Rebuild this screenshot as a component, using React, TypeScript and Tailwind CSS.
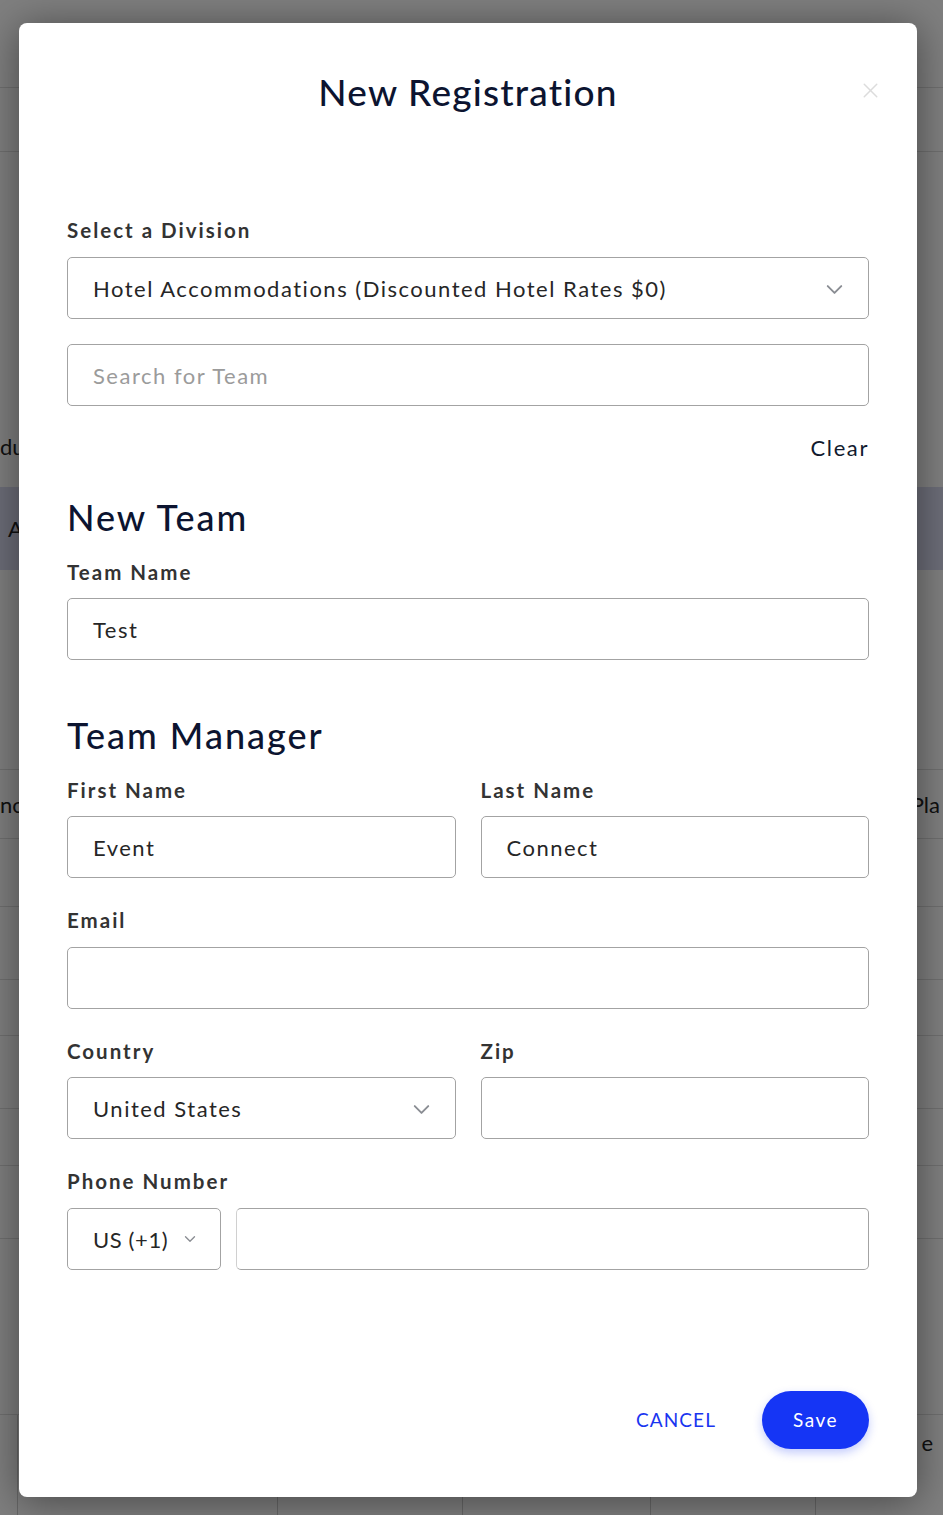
import React from "react";
import { ChevronDown, X } from "lucide-react";

const font = { fontFamily: "Lato, 'Noto Sans', sans-serif" };

function Label({ children }: { children: React.ReactNode }) {
  return (
    <div className="h-[28px] text-[20.5px] leading-[28px] font-bold text-[#333333] tracking-[2px]">
      {children}
    </div>
  );
}

function Field({
  value,
  placeholder,
  className = "",
}: {
  value?: string;
  placeholder?: string;
  className?: string;
}) {
  return (
    <div
      className={`h-[62px] rounded-[5px] border border-[#a3a3a3] flex items-center px-[25px] text-[22px] tracking-[1.5px] ${className}`}
    >
      {value ? (
        <span className="text-[#262626]">{value}</span>
      ) : (
        <span className="text-[#9b9b9b]">{placeholder}</span>
      )}
    </div>
  );
}

function Select({ value, className = "" }: { value: string; className?: string }) {
  return (
    <div
      className={`h-[62px] rounded-[5px] border border-[#a3a3a3] flex items-center justify-between pl-[25px] pr-[20px] text-[22px] tracking-[1.5px] text-[#262626] ${className}`}
    >
      <span>{value}</span>
      <ChevronDown className="w-[27px] h-[27px] mt-[3px] text-[#8a8d93]" strokeWidth={1.7} />
    </div>
  );
}

function BackgroundPage() {
  return (
    <div className="w-[943px] h-[1515px] bg-white text-[22px] text-[#222]" style={font}>
      <div className="h-[87px]" />
      <div className="h-[64px] border-t border-[#dedede]" />
      <div className="h-[280px] border-t border-[#dedede]" />
      <div className="h-[56px] leading-none pt-[5px]">dule</div>
      <div className="h-[83px] bg-[#d8daf0] flex items-center pl-[8px]">All</div>
      <div className="h-[199px]" />
      <div className="h-[69px] border-t border-[#dedede] flex items-center justify-between">
        <span>nc</span>
        <span className="pr-[3px]">Pla</span>
      </div>
      <div className="h-[68px] border-t border-[#dedede]" />
      <div className="h-[73px] border-t border-[#dedede]" />
      <div className="h-[56px] border-t border-[#dedede]" />
      <div className="h-[73px] border-t border-[#dedede]" />
      <div className="h-[57px] border-t border-[#dedede]" />
      <div className="h-[73px] border-t border-[#dedede]" />
      <div className="h-[176px] border-t border-[#dedede]" />
      <div className="h-[101px] border-t border-[#dedede] flex">
        <div className="w-[17px]" />
        <div className="flex-1 flex pt-[25px] border-l border-[#cfcfcf]">
          <div className="w-[260px] border-r border-[#cfcfcf]" />
          <div className="w-[185px] border-r border-[#cfcfcf]" />
          <div className="w-[188px] border-r border-[#cfcfcf]" />
          <div className="w-[165px] border-r border-[#cfcfcf]" />
          <div className="flex-1 flex justify-end pr-[10px] items-start -mt-[14px]">e</div>
        </div>
      </div>
    </div>
  );
}

export default function App() {
  return (
    <div className="relative w-[943px] h-[1515px] overflow-hidden" style={font}>
      <BackgroundPage />
      <div className="absolute inset-0 bg-black/50" />

      {/* Dialog */}
      <div className="absolute left-[19px] top-[23px] w-[898px] h-[1474px] bg-white rounded-[8px] shadow-[0_4px_40px_rgba(0,0,0,0.45)] px-[48px] pt-[47px]">
        <div className="relative h-[44px] flex items-center justify-center">
          <h1 className="text-[37px] leading-[44px] font-medium text-[#0c1430] tracking-[1.2px]">
            New Registration
          </h1>
          <X
            className="absolute right-[-14px] top-[8px] w-[25px] h-[25px] text-[#dcdcdc]"
            strokeWidth={1.4}
          />
        </div>

        <div className="mt-[102px]">
          <Label>Select a Division</Label>
          <Select
            className="mt-[13px]"
            value="Hotel Accommodations (Discounted Hotel Rates $0)"
          />
          <Field className="mt-[25px]" placeholder="Search for Team" />
          <div className="mt-[27px] h-[30px] flex justify-end text-[22px] leading-[30px] tracking-[1.6px] text-[#111a2e]">
            Clear
          </div>
        </div>

        <h2 className="mt-[32px] h-[44px] text-[36px] leading-[44px] font-medium text-[#0c1430] tracking-[2px]">
          New Team
        </h2>
        <div className="mt-[19px]">
          <Label>Team Name</Label>
          <Field className="mt-[12px]" value="Test" />
        </div>

        <h2 className="mt-[53px] h-[44px] text-[36px] leading-[44px] font-medium text-[#0c1430] tracking-[2px]">
          Team Manager
        </h2>
        <div className="mt-[19px] grid grid-cols-2 gap-x-[25px]">
          <div>
            <Label>First Name</Label>
            <Field className="mt-[12px]" value="Event" />
          </div>
          <div>
            <Label>Last Name</Label>
            <Field className="mt-[12px]" value="Connect" />
          </div>
        </div>

        <div className="mt-[28px]">
          <Label>Email</Label>
          <Field className="mt-[13px]" />
        </div>

        <div className="mt-[28px] grid grid-cols-2 gap-x-[25px]">
          <div>
            <Label>Country</Label>
            <Select className="mt-[12px]" value="United States" />
          </div>
          <div>
            <Label>Zip</Label>
            <Field className="mt-[12px]" />
          </div>
        </div>

        <div className="mt-[28px]">
          <Label>Phone Number</Label>
          <div className="mt-[13px] flex gap-[15px]">
            <div className="w-[154px] h-[62px] rounded-[5px] border border-[#a3a3a3] flex items-center pl-[25px] gap-[13px] text-[22px] tracking-[0.6px] text-[#262626]">
              <span>US (+1)</span>
              <ChevronDown className="w-[18px] h-[18px] text-[#8a8d93]" strokeWidth={1.8} />
            </div>
            <div className="flex-1 h-[62px] rounded-[5px] border border-[#a3a3a3] border-l-[#d0d0d0]" />
          </div>
        </div>

        <div className="mt-[121px] flex justify-end items-center gap-[46px]">
          <button className="text-[19px] text-[#1a35f0] tracking-[1.1px]">CANCEL</button>
          <button className="w-[107px] h-[58px] rounded-full bg-[#1535f5] text-white text-[19px] tracking-[1.5px] shadow-[0_4px_10px_rgba(21,53,245,0.25)]">
            Save
          </button>
        </div>
      </div>
    </div>
  );
}
